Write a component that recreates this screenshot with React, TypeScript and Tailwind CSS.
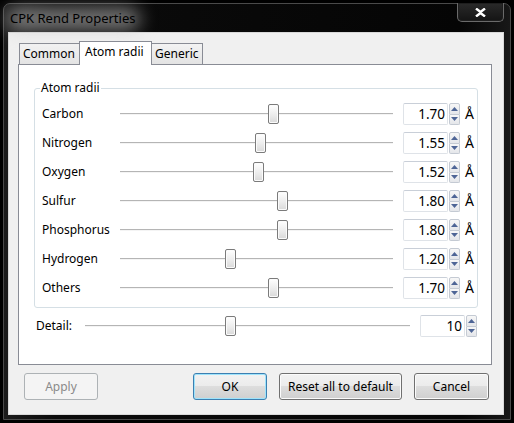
import React from "react";

const rows: { name: string; v: number }[] = [
  { name: "Carbon", v: 1.7 },
  { name: "Nitrogen", v: 1.55 },
  { name: "Oxygen", v: 1.52 },
  { name: "Sulfur", v: 1.8 },
  { name: "Phosphorus", v: 1.8 },
  { name: "Hydrogen", v: 1.2 },
  { name: "Others", v: 1.7 },
];

function Thumb({ left }: { left: number }) {
  return (
    <div
      className="absolute top-1/2 -translate-y-1/2 w-[11px] h-[20px] rounded-[2px] border border-[#7b7b7b] bg-[linear-gradient(#ffffff,#ececec_55%,#d9d9d9)] shadow-[inset_0_0_0_1px_#fbfbfb]"
      style={{ left }}
    />
  );
}

function Track({ width, thumbLeft }: { width: number; thumbLeft: number }) {
  return (
    <div className="relative h-[22px] flex items-center" style={{ width }}>
      <div className="w-full h-[2px] border-t border-[#b5b5b5] border-b border-b-[#f4f4f4] bg-[#e2e2e2]" />
      <Thumb left={thumbLeft} />
    </div>
  );
}

function Arrows() {
  return (
    <div className="flex flex-col w-[11px] h-[22px] ml-px">
      <div className="flex-1 flex items-center justify-center border border-[#c4cad3] rounded-t-[2px] bg-[linear-gradient(#f7f7f7,#e4e6ea)]">
        <svg width="7" height="4" viewBox="0 0 7 4">
          <path d="M0 4 L3.5 0 L7 4 Z" fill="#4e6596" />
        </svg>
      </div>
      <div className="flex-1 flex items-center justify-center border border-t-0 border-[#c4cad3] rounded-b-[2px] bg-[linear-gradient(#f7f7f7,#e4e6ea)]">
        <svg width="7" height="4" viewBox="0 0 7 4">
          <path d="M0 0 L7 0 L3.5 4 Z" fill="#4e6596" />
        </svg>
      </div>
    </div>
  );
}

function SpinBox({ value, width }: { value: string; width: number }) {
  return (
    <div className="flex items-center">
      <div
        className="h-[22px] border border-[#dfe3e8] border-t-[#c9cfd8] rounded-[2px] bg-white flex items-center justify-end pr-[2px] text-[13.5px] text-black"
        style={{ width }}
      >
        {value}
      </div>
      <Arrows />
    </div>
  );
}

function Button({
  label,
  width,
  variant,
}: {
  label: string;
  width: number;
  variant?: "disabled" | "default";
}) {
  if (variant === "disabled") {
    return (
      <div
        className="h-[27px] rounded-[3px] border border-[#adb2b5] bg-[#f4f4f4] flex items-center justify-center text-[#8a8a8a]"
        style={{ width }}
      >
        {label}
      </div>
    );
  }
  if (variant === "default") {
    return (
      <div
        className="h-[27px] rounded-[3px] border border-[#3c7fb1] bg-[linear-gradient(#f2f2f2_0%,#ebebeb_50%,#dddddd_50%,#cfcfcf_100%)] shadow-[inset_0_0_0_1px_#9ee3fb] flex items-center justify-center text-black"
        style={{ width }}
      >
        {label}
      </div>
    );
  }
  return (
    <div
      className="h-[27px] rounded-[3px] border border-[#707070] bg-[linear-gradient(#f2f2f2_0%,#ebebeb_50%,#dddddd_50%,#cfcfcf_100%)] shadow-[inset_0_0_0_1px_#fbfbfb] flex items-center justify-center text-black"
      style={{ width }}
    >
      {label}
    </div>
  );
}

export default function App() {
  return (
    <div
      className="w-[514px] h-[423px] bg-black p-[3px] text-[12px] leading-[16px] overflow-hidden"
      style={{ fontFamily: '"Noto Sans", "Liberation Sans", sans-serif' }}
    >
      <div className="h-full rounded-t-[7px] border border-[#4a4a4a] bg-[linear-gradient(90deg,#1c1c1c,#0b0b0b_10%,#050505_90%,#181818)] flex flex-col pl-[4px] pr-[6px] pb-[4px]">
        {/* Title bar */}
        <div className="h-[28px] flex items-start justify-between shrink-0">
          <div className="relative pt-[5px] pl-[2px]">
            <div className="absolute left-[-2px] top-[4px] w-[134px] h-[22px] rounded-[11px] bg-[#c8c8c8]/60 blur-[9px]" />
            <span className="relative text-[13px] text-black leading-[18px]">CPK Rend Properties</span>
          </div>
          <div className="w-[47px] h-[19px] mt-[-1px] rounded-b-[5px] border border-t-0 border-[#6a6a6a] bg-[linear-gradient(#2a2a2a,#141414)] shadow-[inset_0_0_0_1px_#1e1e1e] flex items-center justify-center">
            <svg width="11" height="9" viewBox="0 0 11 9">
              <path
                d="M1 0.5 L5.5 4 L10 0.5 M1 8.5 L5.5 5 L10 8.5"
                stroke="#ffffff"
                strokeWidth="2.4"
                fill="none"
              />
            </svg>
          </div>
        </div>

        {/* Client area */}
        <div className="flex-1 border border-[#d9d9d9] bg-[#f0f0f0] flex flex-col pt-[8px]">
          {/* Tabs */}
          <div className="ml-[10px] h-[23px] flex items-end">
            <div className="w-[60px] h-[21px] border-l border-t border-[#898c95] bg-[linear-gradient(#f3f3f3,#e3e3e3)] flex items-center pl-[3px] text-black">
              Common
            </div>
            <div className="relative z-10 w-[73px] h-[24px] mb-[-1px] border-l border-t border-r border-[#898c95] bg-white flex items-start pt-[2px] pl-[5px] text-black">
              Atom radii
            </div>
            <div className="w-[51px] h-[21px] border-t border-r border-[#898c95] bg-[linear-gradient(#f3f3f3,#e3e3e3)] flex items-center pl-[3px] text-black">
              Generic
            </div>
          </div>

          {/* Panel */}
          <div className="ml-[9px] w-[474px] h-[301px] border border-[#898c95] bg-white flex flex-col pt-[23px]">
            <div className="relative ml-[15px] w-[444px] border border-[#d5dfe5] rounded-[3px] flex flex-col gap-[7px] pt-[14px] pb-[8px] pl-[7px]">
              <div className="absolute left-[5px] top-[-9px] bg-white px-[1px] text-black leading-[16px]">
                Atom radii
              </div>
              {rows.map((r) => (
                <div key={r.name} className="flex items-center h-[22px]">
                  <div className="w-[78px] text-black">{r.name}</div>
                  <Track width={273} thumbLeft={Math.round((r.v / 3) * 262)} />
                  <div className="ml-[10px]">
                    <SpinBox value={r.v.toFixed(2)} width={45} />
                  </div>
                  <div className="ml-[5px] text-[14px] text-black">Å</div>
                </div>
              ))}
            </div>
            <div className="mt-[7px] pl-[17px] flex items-center h-[22px]">
              <div className="w-[49px] text-black">Detail:</div>
              <Track width={325} thumbLeft={140} />
              <div className="ml-[10px]">
                <SpinBox value="10" width={45} />
              </div>
            </div>
          </div>

          {/* Buttons */}
          <div className="mt-[8px] pl-[15px] flex items-center">
            <Button label="Apply" width={74} variant="disabled" />
            <div className="ml-[95px]">
              <Button label="OK" width={74} variant="default" />
            </div>
            <div className="ml-[12px]">
              <Button label="Reset all to default" width={123} />
            </div>
            <div className="ml-[12px]">
              <Button label="Cancel" width={75} />
            </div>
          </div>
        </div>
      </div>
    </div>
  );
}
